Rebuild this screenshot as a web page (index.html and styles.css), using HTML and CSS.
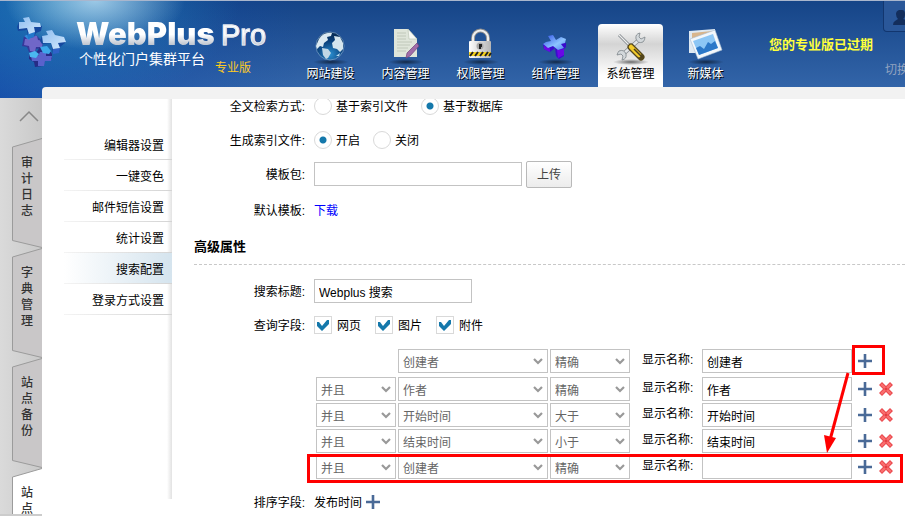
FILE: index.html
```html
<!DOCTYPE html>
<html lang="zh-CN">
<head>
	<title>WebPlus Pro</title>
	<meta charset="utf-8">
	<link rel="stylesheet" href="styles.css">
</head>
<body>
	<svg class="defs" width="0" height="0">
		<defs>
			<linearGradient id="gLight" x1="0" y1="0" x2="1" y2="1"><stop offset="0" stop-color="#8fbdf0"/><stop offset="1" stop-color="#d2e8fc"/></linearGradient>
			<linearGradient id="gPlus" x1="0" y1="0" x2="1" y2="1"><stop offset="0" stop-color="#2f4fe6"/><stop offset=".6" stop-color="#8cc4ff"/><stop offset="1" stop-color="#4f7cf0"/></linearGradient>
			<linearGradient id="gLock" x1="0" y1="0" x2="1" y2="0"><stop offset="0" stop-color="#fff"/><stop offset="1" stop-color="#b5b5b5"/></linearGradient>
			<radialGradient id="gGlobe" cx=".5" cy=".8" r=".8"><stop offset="0" stop-color="#2b8fd0"/><stop offset=".6" stop-color="#0a3f7a"/><stop offset="1" stop-color="#06284f"/></radialGradient>
			<radialGradient id="gShade"><stop offset="0" stop-color="#000" stop-opacity=".55"/><stop offset="1" stop-color="#000" stop-opacity="0"/></radialGradient>
			<symbol id="add" viewBox="0 0 14 14"><path d="M7 0v14M0 7h14" stroke="#4a6a97" stroke-width="2.6"/></symbol>
			<symbol id="del" viewBox="0 0 14 14">
				<path d="M3 3l8 8M11 3l-8 8" stroke="#e8444a" stroke-width="4.2" stroke-linecap="square"/>
				<path d="M3 3l8 8M11 3l-8 8" stroke="#fa6f6f" stroke-width="2.4" stroke-linecap="square"/>
				<path d="M5.5 7h3M7 5.5v3" stroke="#e23b3f" stroke-width="1.5"/>
			</symbol>
			<symbol id="tabShape" viewBox="0 0 30 110">
				<path d="M30 .5L.5 9v93.5L30 109.5" stroke="#9b9b9b" stroke-width="1"/>
			</symbol>
		</defs>
	</svg>

	<header class="header">
		<div class="brand">
			<svg class="logo" width="52" height="54" viewBox="0 0 52 54">
				<!-- middle cube cross -->
				<path d="M9 20l6-2 7 2 6 6-1 6-6 1-1 5-6-2-2-5-5-1z" fill="#35389a"/>
				<path d="M10 23l5-1 1-3 6 1 1 4 5 1-1 6-6 0-1 5-5-1-1-5-5-1z" fill="#7067c8"/>
				<path d="M9 20l5-2 3 2-3 4z" fill="#2f8fdc"/>
				<!-- bottom cube cross -->
				<path d="M14 37l7 0 4-6 8 1 4 6 0 5-7 2-2 5-8 1-1-5-5-3z" fill="#262c86"/>
				<path d="M16 40l7 0 2-4 6 0 0 4 6 0-1 5-6 0-1 5-6 0 0-5-6 0z" fill="#5a62cc"/>
				<path d="M14 37l6-2 4 3-3 4-6-1z" fill="#4ab8f0"/>
				<path d="M25 31l7-1 4 5-2 3-6-1z" fill="#3da8ea"/>
				<!-- left cross -->
				<path d="M4 6l-2 5 1 4 9-1 1 8 6-1 2-4 5-2 1-5z" fill="#15489f"/>
				<path d="M13 17l7-1-1 5-6 2z" fill="#2277cc"/>
				<path d="M4 6h6L8 2l6-1 2 5 9 1 1 4-7 0 1 5-6 2-2-6-8 1z" fill="url(#gLight)"/>
				<!-- right cross -->
				<path d="M27 20l-2 5 2 3 9-1 2 10 6-1 1-5 5-4 0-4z" fill="#15489f"/>
				<path d="M38 33l7-1-1 5-6 1z" fill="#2f62c8"/>
				<path d="M27 20l6-1-2-4 6-1 3 5 9 2 2 5-8 1 2 5-7 1-2-6-8 0z" fill="url(#gLight)"/>
			</svg>
			<div class="names">
				<h1 class="name">WebPlus <span class="pro">Pro</span></h1>
				<p class="slogan">个性化门户集群平台 <span class="edition">专业版</span></p>
			</div>
		</div>

		<nav class="nav">
			<a class="item" href="#">
				<svg width="40" height="40" viewBox="0 0 40 40">
					<ellipse cx="20" cy="36" rx="18" ry="3" fill="url(#gShade)"/>
					<circle cx="19" cy="20" r="14" fill="url(#gGlobe)" stroke="#7fa6cc" stroke-width=".7"/>
					<path d="M8 13c3-5 8-7 13-6l-1 3-4 1 1 3-4 3-1 4-3-1-3 3-1-3z" fill="#dbe9f1"/>
					<path d="M11 22l6 1 3 4-3 5-2 1-3-4z" fill="#c0d7e6"/>
					<path d="M23 10l6 1 3 6v6l-3 3-3-3-4-1-1-5 3-3z" fill="#d5e5ee"/>
					<path d="M25 30l4-3-1 3z" fill="#bbdcef"/>
				</svg>
				网站建设
			</a>
			<a class="item" href="#">
				<svg width="40" height="40" viewBox="0 0 40 40">
					<ellipse cx="20" cy="36" rx="18" ry="3" fill="url(#gShade)"/>
					<path d="M8 3h14l9 10v18H8z" fill="#dfe5da"/>
					<path d="M22 3l1 10h8z" fill="#f7f9f4" stroke="#b5bfae" stroke-width=".6"/>
					<path d="M11 7h9M11 10h9M11 13h9M11 16h15M11 19h13M11 22h11M11 25h9" stroke="#b8c2b2" stroke-width=".8"/>
					<path d="M31 17l2 3-9 10-4 2 1-5z" fill="#a06ca8" stroke="#6f437b" stroke-width=".7"/>
				</svg>
				内容管理
			</a>
			<a class="item" href="#">
				<svg width="40" height="40" viewBox="0 0 40 40">
					<ellipse cx="20" cy="36" rx="18" ry="3" fill="url(#gShade)"/>
					<path d="M12 17v-5a7 7 0 0 1 15 0v5" fill="none" stroke="#8c8c8c" stroke-width="4"/>
					<path d="M12 17v-5a7 7 0 0 1 15 0v5" fill="none" stroke="#eee" stroke-width="2.2"/>
					<rect x="8" y="15" width="22" height="17" rx="1" fill="url(#gLock)"/>
					<circle cx="19" cy="20" r="3.5" fill="#aaa"/>
					<path d="M18 18h3v3h-1v2h-2z" fill="#222"/>
					<path d="M8 26h22v4H8z" fill="#f4d21f"/>
					<path d="M9 30l3-4M14 30l3-4M19 30l3-4M24 30l3-4M28 30l2-3" stroke="#222" stroke-width="2"/>
				</svg>
				权限管理
			</a>
			<a class="item" href="#">
				<svg width="40" height="40" viewBox="0 0 40 40">
					<ellipse cx="20" cy="36" rx="18" ry="3" fill="url(#gShade)"/>
					<path d="M7 18l1 5 6 3 5-4 1 8 3 3 5-3v-7l2-2v-4z" fill="#3a0ccc"/>
					<path d="M8 20l6 2v4l-6-3zM21 24l7-1v6l-6 3z" fill="#6a08e6"/>
					<path d="M12 10l5-1 3 5 5-3 5 2-1 4-4 1 3 4-6 2-5-4-5 2-5-4 3-2 5-1z" fill="url(#gPlus)"/>
				</svg>
				组件管理
			</a>
			<a class="item active" href="#">
				<svg width="40" height="40" viewBox="0 0 40 40">
					<ellipse cx="20" cy="36" rx="18" ry="3" fill="url(#gShade)"/>
					<path d="M11 29L29 13" stroke="#858b90" stroke-width="4"/>
					<path d="M11 29L29 13" stroke="#e2e5e7" stroke-width="2.4"/>
					<path d="M29 7q-5 1-4 6 2 5 7 3 2-2 2-5l-4 2-2-2z" fill="#d3d8db" stroke="#7e858a" stroke-width=".8"/>
					<path d="M11 34q5-1 4-6-2-5-7-3-1 1-2 4l4-1 2 2z" fill="#d3d8db" stroke="#7e858a" stroke-width=".8"/>
					<path d="M8 9l11 11" stroke="#7c8287" stroke-width="2.8"/>
					<path d="M8 9l11 11" stroke="#eee" stroke-width="1.2"/>
					<path d="M20 21l10 10" stroke="#54461a" stroke-width="7" stroke-linecap="round"/>
					<path d="M20 21l8 8" stroke="#f3cb2b" stroke-width="4.5" stroke-linecap="round"/>
					<path d="M23 23l8 8" stroke="#4b3f1c" stroke-width="1.6"/>
				</svg>
				系统管理
			</a>
			<a class="item" href="#">
				<svg width="40" height="40" viewBox="0 0 40 40">
					<ellipse cx="20" cy="36" rx="18" ry="3" fill="url(#gShade)"/>
					<path d="M3 5l26-2 0 24-26 0z" fill="#dfe9f2"/>
					<path d="M6 7l20-2v5L6 17z" fill="#d8b58c"/>
					<path d="M4 13l25-9 7 20-24 9z" fill="#f3f7fb" stroke="#a8bed4" stroke-width=".6"/>
					<path d="M7 15l20-7 5 14-19 7z" fill="#8cc6f5"/>
					<path d="M10 22l4-2 4 3 4-7 3 2 4-3 3 7-19 7z" fill="#2c78c8"/>
				</svg>
				新媒体
			</a>
		</nav>

		<strong class="expired">您的专业版已过期</strong>

		<div class="account">
			<button class="user" type="button" aria-label="用户">
				<svg width="22" height="16" viewBox="0 0 22 16"><path d="M6 0h3q3 0 3 4t-2 5l5 2q2 1 2 4H0q0-3 2-4l3-2q-2-2-2-5t3-4z" fill="#132e5c"/></svg>
			</button>
			<a class="switch" href="#">切换</a>
		</div>
	</header>

	<div class="main">
		<aside class="rail">
			<button class="up" type="button" aria-label="向上">
				<svg width="20" height="12" viewBox="0 0 20 12"><path d="M1 11L10 2l9 9" fill="none" stroke="#888" stroke-width="1.5"/></svg>
			</button>
			<a class="tab" href="#"><svg class="shape" width="30" height="110" fill="#c9c7c8"><use href="#tabShape"/></svg><span>审计日志</span></a>
			<a class="tab" href="#"><svg class="shape" width="30" height="110" fill="#c9c7c8"><use href="#tabShape"/></svg><span>字典管理</span></a>
			<a class="tab" href="#"><svg class="shape" width="30" height="110" fill="#c9c7c8"><use href="#tabShape"/></svg><span>站点备份</span></a>
			<a class="tab current" href="#"><svg class="shape" width="30" height="110" fill="#fff"><use href="#tabShape"/></svg><span>站点</span></a>
		</aside>

		<div class="panel">
			<nav class="menu">
				<a href="#">编辑器设置</a>
				<a href="#">一键变色</a>
				<a href="#">邮件短信设置</a>
				<a href="#">统计设置</a>
				<a class="on" href="#">搜索配置</a>
				<a href="#">登录方式设置</a>
			</nav>

			<form class="content">
				<div class="row first">
					<span class="label">全文检索方式:</span>
					<label class="option"><input type="radio" name="mode"><span>基于索引文件</span></label>
					<label class="option"><input type="radio" name="mode" checked><span>基于数据库</span></label>
				</div>
				<div class="row">
					<span class="label">生成索引文件:</span>
					<label class="option"><input type="radio" name="build" checked><span>开启</span></label>
					<label class="option"><input type="radio" name="build"><span>关闭</span></label>
				</div>
				<div class="row">
					<label class="label" for="pack">模板包:</label>
					<input class="text pack" id="pack" type="text">
					<button class="upload" type="button">上传</button>
				</div>
				<div class="row tall">
					<span class="label">默认模板:</span>
					<a class="download" href="#">下载</a>
				</div>

				<h2 class="title">高级属性</h2>

				<div class="row">
					<label class="label" for="caption">搜索标题:</label>
					<input class="text caption" id="caption" type="text" value="Webplus 搜索">
				</div>
				<div class="row">
					<span class="label">查询字段:</span>
					<label class="option check"><input type="checkbox" checked><span>网页</span></label>
					<label class="option check"><input type="checkbox" checked><span>图片</span></label>
					<label class="option check"><input type="checkbox" checked><span>附件</span></label>
				</div>

				<div class="fields">
					<div class="field">
						<span></span>
						<select aria-label="字段"><option>创建者</option></select>
						<select aria-label="匹配"><option>精确</option></select>
						<label for="n1">显示名称:</label>
						<input class="text" id="n1" type="text" value="创建者">
						<button class="icon" type="button" aria-label="添加"><svg width="14" height="14"><use href="#add"/></svg></button>
					</div>
					<div class="field">
						<select aria-label="关系"><option>并且</option></select>
						<select aria-label="字段"><option>作者</option></select>
						<select aria-label="匹配"><option>精确</option></select>
						<label for="n2">显示名称:</label>
						<input class="text" id="n2" type="text" value="作者">
						<button class="icon" type="button" aria-label="添加"><svg width="14" height="14"><use href="#add"/></svg></button>
						<button class="icon" type="button" aria-label="删除"><svg width="14" height="14"><use href="#del"/></svg></button>
					</div>
					<div class="field">
						<select aria-label="关系"><option>并且</option></select>
						<select aria-label="字段"><option>开始时间</option></select>
						<select aria-label="匹配"><option>大于</option></select>
						<label for="n3">显示名称:</label>
						<input class="text" id="n3" type="text" value="开始时间">
						<button class="icon" type="button" aria-label="添加"><svg width="14" height="14"><use href="#add"/></svg></button>
						<button class="icon" type="button" aria-label="删除"><svg width="14" height="14"><use href="#del"/></svg></button>
					</div>
					<div class="field">
						<select aria-label="关系"><option>并且</option></select>
						<select aria-label="字段"><option>结束时间</option></select>
						<select aria-label="匹配"><option>小于</option></select>
						<label for="n4">显示名称:</label>
						<input class="text" id="n4" type="text" value="结束时间">
						<button class="icon" type="button" aria-label="添加"><svg width="14" height="14"><use href="#add"/></svg></button>
						<button class="icon" type="button" aria-label="删除"><svg width="14" height="14"><use href="#del"/></svg></button>
					</div>
					<div class="field">
						<select aria-label="关系"><option>并且</option></select>
						<select aria-label="字段"><option>创建者</option></select>
						<select aria-label="匹配"><option>精确</option></select>
						<label for="n5">显示名称:</label>
						<input class="text" id="n5" type="text">
						<button class="icon" type="button" aria-label="添加"><svg width="14" height="14"><use href="#add"/></svg></button>
						<button class="icon" type="button" aria-label="删除"><svg width="14" height="14"><use href="#del"/></svg></button>
					</div>
					<!-- marks: first add button leads to the new row -->
					<svg class="marks" width="596" height="138" viewBox="0 0 596 138">
						<g fill="none" stroke="#f00" stroke-width="3">
							<rect x="546.5" y="1.5" width="30" height="27"/>
							<rect x="1.5" y="110.5" width="593" height="26"/>
							<path d="M541 28L523 95"/>
						</g>
						<path d="M520 108l-3-18 12 3z" fill="#f00"/>
					</svg>
				</div>

				<div class="row sort">
					<span class="label">排序字段:</span>
					<span>发布时间</span>
					<button class="icon" type="button" aria-label="添加"><svg width="14" height="14"><use href="#add"/></svg></button>
				</div>
			</form>
		</div>
	</div>
</body>
</html>
```
FILE: styles.css
```css
	*{
		box-sizing: border-box;
	}
	body{
		display: flex;
		flex-direction: column;
		height: 100vh;
		margin: 0;
		overflow: hidden;
		font: 12px/16px "Liberation Sans", "Noto Sans CJK SC", sans-serif;
		color: #000;
		background:
			radial-gradient(ellipse 90px 50px at 95px 0, rgba(190,225,245,.8), rgba(190,225,245,0)),
			radial-gradient(ellipse 180px 110px at 60px 0, rgba(40,150,195,.6), rgba(40,150,195,0)),
			linear-gradient(90deg, rgba(12,70,170,.7), rgba(12,70,170,0) 300px),
			linear-gradient(#154487, #3365a9 88px);
		background-size: 100% 98px;
		background-repeat: no-repeat;
	}
	button, input, select{
		font: inherit;
	}
	a{
		color: inherit;
		text-decoration: none;
	}
	.defs{
		position: absolute;
	}

	/* header */
	.header{
		display: flex;
		flex: none;
		height: 87px;
		border-top: 1px solid #a9b6cd;
	}
	.brand{
		display: flex;
		flex: none;
		width: 298px;
		padding: 15px 0 0 15px;
	}
	.logo{
		flex: none;
		margin-right: 9px;
	}
	.name{
		margin: 1px 0 0;
		font: 900 31px/34px Inter, sans-serif;
		white-space: nowrap;
		color: transparent;
		background: linear-gradient(#fff 50%, #b3bac6 85%);
		-webkit-background-clip: text;
		background-clip: text;
	}
	.pro{
		font: 29px/34px "Liberation Sans", sans-serif;
		-webkit-text-stroke: 1px #e3e7ee;
	}
	.slogan{
		display: flex;
		margin: 0 0 0 3px;
		font-size: 14px;
		line-height: 14px;
		color: #fff;
	}
	.edition{
		padding: 9px 0 0 10px;
		font-size: 12px;
		color: #ffcb1f;
	}
	.nav{
		display: flex;
		gap: 10px;
		padding-top: 23px;
	}
	.item{
		display: flex;
		flex-direction: column;
		align-items: center;
		width: 65px;
		padding-top: 2px;
		line-height: 16px;
		color: #fff;
		text-shadow: 1px 1px 0 #000;
		border-radius: 4px 4px 0 0;
	}
	.active{
		color: #000;
		text-shadow: none;
		background: linear-gradient(#fff, #d4d4d4 20px, #fff 52px);
	}
	.expired{
		padding: 36px 0 0 31px;
		font-size: 13px;
		white-space: nowrap;
		color: #ffff3c;
	}
	.account{
		flex: none;
		width: 48px;
		margin: 0 -26px 0 auto;
	}
	.user{
		display: flex;
		width: 48px;
		height: 31px;
		padding: 9px 0 0 9px;
		border: 1px solid #12366f;
		border-top: 0;
		border-radius: 0 0 4px 4px;
		background: #2a5799;
	}
	.switch{
		display: block;
		padding: 30px 0 0 2px;
		color: #93a4c0;
	}

	/* left rail */
	.main{
		display: flex;
		flex: 1;
		min-height: 0;
	}
	.rail{
		flex: none;
		width: 42px;
		margin-top: 11px;
		overflow: hidden;
		border-bottom: 2px solid #ccc;
		background: linear-gradient(90deg, #dadada, #c9c9c9);
	}
	.up{
		display: flex;
		height: 40px;
		margin-left: 19px;
		padding: 12px 0 0;
		border: 0;
		background: none;
	}
	.tab{
		position: relative;
		display: block;
		height: 110px;
		margin-left: 12px;
		padding: 17px 9px 0;
		color: #333;
		font-weight: 500;
		word-break: break-all;
	}
	.tab span{
		position: relative;
	}
	.shape{
		position: absolute;
		top: 0;
		left: 0;
	}

	/* panel */
	.panel{
		display: flex;
		flex: 1;
		min-width: 0;
		padding: 12px 0 0 22px;
		border-radius: 4px 0 0 0;
		background: linear-gradient(#f2f2f2 12px, #fff 12px);
	}
	.menu{
		flex: none;
		width: 108px;
		margin-bottom: 17px;
		padding-top: 30px;
		text-align: right;
		background: linear-gradient(270deg, #e2e2e2, #fff 5px);
	}
	.menu a{
		display: block;
		height: 31px;
		padding: 9px 8px 0 0;
		border-bottom: 1px solid;
		border-image: linear-gradient(90deg, #f4f4f4, #d4d4d4) 1;
	}
	.menu .on{
		background: linear-gradient(90deg, #fff, #d5e4ee);
	}
	.content{
		flex: 1;
		min-width: 0;
		overflow: hidden;
	}
	.row{
		display: flex;
		align-items: center;
		height: 34px;
	}
	.first{
		margin-top: -10px;
	}
	.tall{
		height: 38px;
	}
	.row span, .row a, .label{
		padding-top: 2px;
	}
	.row .label{
		width: 142px;
		padding-right: 9px;
		text-align: right;
	}
	.option{
		display: flex;
		align-items: center;
		gap: 4px;
		margin-right: 13px;
	}
	.option input{
		appearance: none;
		width: 18px;
		height: 18px;
		margin: 0;
		border: 1px solid #d9d9d9;
		background: #fff;
	}
	.option input[type=radio]{
		border-radius: 50%;
	}
	.option input[type=radio]:checked{
		background: radial-gradient(circle, #1478ab 3px, #fff 4px);
	}
	.check{
		gap: 5px;
		margin-right: 14px;
	}
	.option input[type=checkbox]:checked{
		background: url('data:image/svg+xml,<svg xmlns="http://www.w3.org/2000/svg" width="16" height="16"><path d="M2 5h2l3 4 5-6h2v4l-7 7-5-5z" fill="%231478ab"/></svg>') center no-repeat;
	}
	.text{
		height: 24px;
		padding: 0 4px;
		border: 1px solid #c3c3c3;
		background: #fff;
		color: #000;
	}
	.pack{
		width: 208px;
	}
	.caption{
		width: 158px;
	}
	.upload{
		width: 46px;
		height: 27px;
		margin-left: 4px;
		padding: 2px 0 0;
		color: #444;
		border: 1px solid #b9b9b9;
		border-radius: 2px;
		background: linear-gradient(#fff, #ececec);
	}
	.download{
		color: #00f;
	}
	.title{
		height: 36px;
		margin: 0 0 9px 22px;
		padding-top: 10px;
		font-size: 13px;
		line-height: 16px;
		border-bottom: 1px dashed #c8c8c8;
	}
	.fields{
		position: relative;
		padding: 7px 0 0 144px;
	}
	.field{
		display: grid;
		grid-template-columns: 80px 150px 80px 58px 150px 14px 14px;
		column-gap: 2px;
		margin-bottom: 2px;
	}
	.field:first-child{
		margin-bottom: 4px;
	}
	.field label{
		padding-left: 10px;
		line-height: 23px;
		white-space: nowrap;
	}
	.field .text, .field select{
		width: 100%;
	}
	.field label + .text{
		margin-left: 10px;
		width: 150px;
	}
	select{
		appearance: none;
		height: 24px;
		padding: 3px 4px 0;
		border: 1px solid #c3c3c3;
		border-radius: 0;
		color: #666;
		background: #fff url('data:image/svg+xml,<svg xmlns="http://www.w3.org/2000/svg" width="10" height="7"><path d="M1 1l4 4 4-4" fill="none" stroke="%23999" stroke-width="2.2"/></svg>') right 4px top 8px no-repeat;
	}
	.icon{
		display: flex;
		align-items: center;
		width: 14px;
		height: 24px;
		padding: 0;
		border: 0;
		background: none;
	}
	.field .icon{
		margin-left: 14px;
	}
	.field .icon + .icon{
		margin-left: 19px;
	}
	.marks{
		position: absolute;
		top: 3px;
		left: 135px;
		pointer-events: none;
	}
	.sort{
		margin-top: 6px;
	}
	.sort .icon{
		margin-left: 4px;
	}
```
